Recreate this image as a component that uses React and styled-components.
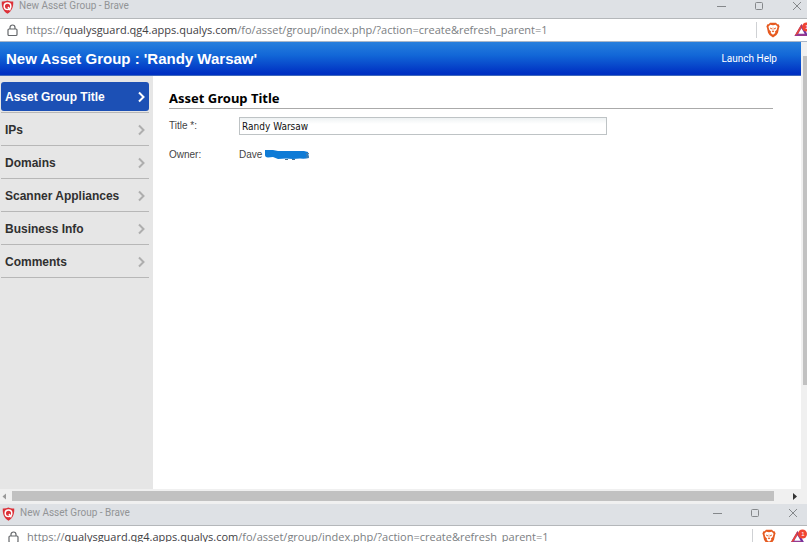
import React from "react";
import styled, { createGlobalStyle } from "styled-components";

const GlobalStyle = createGlobalStyle`
  * { box-sizing: border-box; }
  body { margin: 0; background: #fff; font-family: "Liberation Sans", Arial, sans-serif; }
  button, input { font: inherit; margin: 0; padding: 0; border: 0; background: none; }
`;

const Desktop = styled.div`
  display: flex;
  flex-direction: column;
  height: 100vh;
  overflow: hidden;
`;

const BrowserWindow = styled.section`
  display: flex;
  flex-direction: column;
  min-height: 0;
  overflow: hidden;
  flex: ${(p) => (p.$peek ? "0 0 38px" : "1 1 0")};
`;

const TitleBar = styled.header`
  display: flex;
  flex: none;
  align-items: flex-end;
  gap: 5px;
  height: ${(p) => (p.$peek ? 22 : 19)}px;
  padding: 0 ${(p) => (p.$peek ? 9 : 5)}px 4px ${(p) => (p.$peek ? 2 : 1)}px;
  background: #dee1e5;
  border-bottom: 1px solid #b4b7ba;
`;

const WindowTitle = styled.span`
  flex: 1;
  font: 10px/16px Roboto, "Noto Sans", sans-serif;
  color: #929496;
`;

const WindowButtons = styled.div`
  display: flex;
  gap: 28px;
`;

const WindowButton = styled.button`
  display: flex;
  align-items: center;
  height: 16px;
  color: #85888b;
`;

const AddressBar = styled.div`
  display: flex;
  flex: none;
  align-items: center;
  height: 23px;
  padding: 0 ${(p) => (p.$peek ? 2 : 0)}px 0 ${(p) => (p.$peek ? 8 : 7)}px;
  background: #fff;
  border-bottom: 1px solid #a9b6c8;
`;

const AddressLink = styled.a`
  flex: 1;
  margin-left: 8px;
  font: 11px/20px "Open Sans", "Noto Sans", sans-serif;
  color: #7b7e82;
  text-decoration: none;
  white-space: nowrap;
`;

const Host = styled.span`
  color: #3f4144;
`;

const Extensions = styled.div`
  display: flex;
  align-items: center;
  flex: none;
  height: 16px;
  padding-left: 9px;
  gap: 14px;
  border-left: 1px solid #cfd1d4;
  margin-right: ${(p) => (p.$peek ? -2 : -4)}px;
`;

const IconButton = styled.button`
  display: flex;
`;

const Viewport = styled.div`
  display: grid;
  grid-template: minmax(0, 1fr) 15px / minmax(0, 1fr) 6px;
  flex: 1;
  min-height: 0;
`;

const Page = styled.div`
  display: flex;
  flex-direction: column;
  min-height: 0;
`;

const PageHeader = styled.header`
  display: flex;
  flex: none;
  align-items: center;
  justify-content: space-between;
  height: 34px;
  padding: 0 24px 0 6px;
  color: #fff;
  background: linear-gradient(#277fdd, #1267d7 40%, #0031c3 94%);
  border-bottom: 1px solid #3e68bd;
`;

const PageTitle = styled.h1`
  margin: 0;
  font-size: 15px;
  line-height: 18px;
`;

const HelpLink = styled.a`
  color: #fff;
  font: 10px/14px Roboto, "Liberation Sans", sans-serif;
  text-decoration: none;
`;

const PageBody = styled.div`
  display: flex;
  flex: 1;
  min-height: 0;
`;

const Sidebar = styled.nav`
  flex: 0 0 153px;
  padding: 4px 4px 0 1px;
  background: #e6e6e6;
`;

const NavItem = styled.div`
  height: 33px;
  padding: 2px 0 1px;
  border-bottom: 1px solid #b7b7b7;
`;

const NavButton = styled.button`
  display: flex;
  align-items: center;
  justify-content: space-between;
  width: 100%;
  height: 29px;
  padding: 0 4px;
  border-radius: 3px;
  font-size: 12px;
  font-weight: bold;
  line-height: 16px;
  text-align: left;
  color: ${(p) => (p.$active ? "#fff" : "#303030")};
  background: ${(p) => (p.$active ? "#1c50b5" : "none")};

  svg { color: ${(p) => (p.$active ? "#fff" : "#aeaeae")}; }
`;

const Content = styled.main`
  flex: 1;
  min-width: 0;
  padding: 14px 28px 0 16px;
`;

const SectionTitle = styled.h2`
  margin: 0 0 8px;
  padding-bottom: 1px;
  border-bottom: 1px solid #aaa;
  font: 700 13px/17px "Noto Sans", "Open Sans", sans-serif;
  color: #000;
`;

const FormRow = styled.div`
  display: grid;
  grid-template-columns: 70px minmax(0, 1fr);
  align-items: center;
  min-height: 18px;
  margin-bottom: 11px;
  font-size: 10px;
  line-height: 14px;
  color: #444;
`;

const TitleInput = styled.input`
  width: 69%;
  height: 18px;
  padding: 0 2px;
  border: 1px solid #bec3c5;
  background: linear-gradient(#eef2f3, #fff 6px);
  font: 10px/14px "DejaVu Sans Condensed", "Noto Sans", sans-serif;
  color: #111;
`;

const Owner = styled.output`
  display: flex;
  align-items: center;
  gap: 2px;
`;

const VerticalTrack = styled.div`
  padding: 14px 0 0 2px;
  background: #f0f0f0;
`;

const VerticalThumb = styled.div`
  height: 76%;
  background: #c1c1c1;
`;

const HorizontalTrack = styled.div`
  grid-column: 1 / -1;
  display: grid;
  grid-template-columns: 12px minmax(0, 1fr) 33px;
  align-items: center;
  height: 15px;
  padding-bottom: 1px;
  background: #f0f0f0;
`;

const HorizontalThumb = styled.div`
  height: 10px;
  background: #c1c1c1;
`;

const ScrollArrow = styled.button`
  display: flex;
  justify-content: ${(p) => (p.$end ? "flex-end" : "flex-start")};
  padding: ${(p) => (p.$end ? "0 10px 0 0" : "0 0 0 2px")};
  color: ${(p) => (p.$end ? "#333" : "#999")};
`;

const ShieldIcon = () => (
  <svg width="13" height="14" viewBox="0 0 13 14" aria-hidden="true">
    <path d="M6.5 0.5C8.5 1.4 10.5 1.5 12.2 1.4C12.6 6.5 11 11 6.5 13.7C2 11 .4 6.5 .8 1.4C2.500 1.500 4.500 1.400 6.500 .500Z" fill="#dc3038" />
    <circle cx="6.500" cy="6.300" r="3.300" fill="none" stroke="#fff" strokeWidth="1.500" />
    <path d="M7 7L9.300 10.400" stroke="#fff" strokeWidth="1.400" />
  </svg>
);

const LockIcon = () => (
  <svg width="11" height="13" viewBox="0 0 11 13" fill="none" stroke="#65686b" strokeWidth="1.200" aria-hidden="true">
    <rect x="1" y="5" width="9" height="6.500" rx="1" />
    <path d="M3 5V3.500A2.500 2.500 0 0 1 8 3.500V5" />
  </svg>
);

const BraveIcon = () => (
  <svg width="14" height="16" viewBox="0 0 14 16" aria-hidden="true">
    <path d="M4 .8H10L11.300 2.200L12.600 2.300L13.600 4.400L13 6L12 10.800L10.500 13L7 15.400L3.500 13L2 10.800L1 6L.4 4.400L1.400 2.300L2.700 2.200Z" fill="#e65a20" />
    <path d="M4.200 2.800L7 3.300L9.800 2.800L11.600 4.800L10.600 8L9 9.600L9.300 11L7 12.800L4.700 11L5 9.600L3.400 8L2.400 4.800Z" fill="#fff" />
    <path d="M3.800 5.400L6 6.200L5.500 7.500L4.600 7ZM10.200 5.400L8 6.200L8.500 7.500L9.400 7ZM6.700 5.500H7.300V8.800L8.300 9.500L7 10.300L5.700 9.500L6.700 8.800Z" fill="#e65a20" />
  </svg>
);

const RewardsIcon = () => (
  <svg width="17" height="16" viewBox="0 0 17 16" aria-hidden="true">
    <path d="M7.500 2L.5 14H14.500Z" fill="#732f9d" />
    <path d="M7.500 2L.5 14L4 12L7.500 6Z" fill="#e6463e" />
    <path d="M.5 14H14.500L11 12H4Z" fill="#963a91" />
    <path d="M7.500 6.200L4.300 11.700H10.700Z" fill="#fff" />
    <circle cx="12.500" cy="5" r="4.500" fill="#f04432" />
    <text x="11.200" y="7.300" fontFamily="Liberation Sans, sans-serif" fontSize="6" fill="#fff">1</text>
  </svg>
);

const Chevron = () => (
  <svg width="7" height="12" viewBox="0 0 7 12" fill="none" stroke="currentColor" strokeWidth="2" aria-hidden="true">
    <path d="M1 1.500L5.500 6L1 10.500" />
  </svg>
);

const MinimizeIcon = () => (
  <svg width="9" height="10" viewBox="0 0 9 10" stroke="currentColor" aria-hidden="true"><path d="M0 5.500H9" /></svg>
);

const MaximizeIcon = () => (
  <svg width="10" height="10" viewBox="0 0 10 10" fill="none" stroke="currentColor" aria-hidden="true"><rect x="1.500" y="1.500" width="7" height="7" rx="1" /></svg>
);

const CloseIcon = () => (
  <svg width="10" height="10" viewBox="0 0 10 10" stroke="currentColor" aria-hidden="true"><path d="M1 1L9 9M9 1L1 9" /></svg>
);

const Scribble = () => (
  <svg width="46" height="12" viewBox="0 0 46 12" role="img" aria-label="Surname hidden">
    <path d="M1 1H9L14 2H40L44 3L45 9Q41 10 36 9.500L29 10L22 9.500L14 10L9 8L4 8.500Q1 8 1 6Z" fill="#0e7bd6" />
    <path d="M21 10.500H24M28 10.500H31" stroke="#477292" fill="none" />
    <path d="M45 4.500Q42 4 42.500 5.500T45 7.500Q44 9 42 8" stroke="#5b7f9c" fill="none" />
  </svg>
);

const ArrowIcon = ({ left }) => (
  <svg width="5" height="7" viewBox="0 0 5 7" fill="currentColor" aria-hidden="true">
    <path d={left ? "M4 .5V6.500L.5 3.500Z" : "M1 0V7L5 3.500Z"} />
  </svg>
);

const sections = ["Asset Group Title", "IPs", "Domains", "Scanner Appliances", "Business Info", "Comments"];

function BrowserChrome({ peek }) {
  return (
    <>
      <TitleBar $peek={peek}>
        <ShieldIcon />
        <WindowTitle>New Asset Group - Brave</WindowTitle>
        <WindowButtons>
          <WindowButton aria-label="Minimize"><MinimizeIcon /></WindowButton>
          <WindowButton aria-label="Maximize"><MaximizeIcon /></WindowButton>
          <WindowButton aria-label="Close"><CloseIcon /></WindowButton>
        </WindowButtons>
      </TitleBar>
      <AddressBar $peek={peek}>
        <LockIcon />
        <AddressLink href="#">
          https://<Host>qualysguard.qg4.apps.qualys.com</Host>/fo/asset/group/index.php/?action=create&amp;refresh_parent=1
        </AddressLink>
        <Extensions $peek={peek}>
          <IconButton aria-label="Brave Shields"><BraveIcon /></IconButton>
          <IconButton aria-label="Brave Rewards"><RewardsIcon /></IconButton>
        </Extensions>
      </AddressBar>
    </>
  );
}

export default function App() {
  return (
    <Desktop>
      <GlobalStyle />
      <BrowserWindow>
        <BrowserChrome />
        <Viewport>
          <Page>
            <PageHeader>
              <PageTitle>New Asset Group : 'Randy Warsaw'</PageTitle>
              <HelpLink href="#">Launch Help</HelpLink>
            </PageHeader>
            <PageBody>
              <Sidebar>
                {sections.map((name, i) => (
                  <NavItem key={name}>
                    <NavButton $active={i === 0}>{name}<Chevron /></NavButton>
                  </NavItem>
                ))}
              </Sidebar>
              <Content>
                <SectionTitle>Asset Group Title</SectionTitle>
                <FormRow>
                  <label htmlFor="title">Title *:</label>
                  <TitleInput id="title" defaultValue="Randy Warsaw" />
                </FormRow>
                <FormRow>
                  <label htmlFor="owner">Owner:</label>
                  <Owner id="owner">Dave <Scribble /></Owner>
                </FormRow>
              </Content>
            </PageBody>
          </Page>
          <VerticalTrack><VerticalThumb /></VerticalTrack>
          <HorizontalTrack>
            <ScrollArrow aria-label="Scroll left"><ArrowIcon left /></ScrollArrow>
            <HorizontalThumb />
            <ScrollArrow $end aria-label="Scroll right"><ArrowIcon /></ScrollArrow>
          </HorizontalTrack>
        </Viewport>
      </BrowserWindow>
      <BrowserWindow $peek>
        <BrowserChrome peek />
      </BrowserWindow>
    </Desktop>
  );
}
